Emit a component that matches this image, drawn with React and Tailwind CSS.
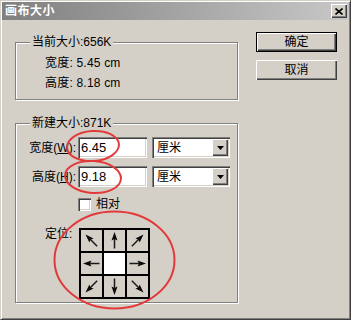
import React from "react";

const FONT = { fontFamily: '"Liberation Sans", "Noto Sans CJK SC", sans-serif' };

function Arrow({ angle }) {
  return (
    <svg width="21" height="21" viewBox="0 0 21 21">
      <g transform={`rotate(${angle} 10.5 10.5)`}>
        <line x1="2.5" y1="10.5" x2="13" y2="10.5" stroke="#1a1a1a" strokeWidth="1.5" />
        <polygon points="10.5,7.5 19,10.5 10.5,13.5 12,10.5" fill="#0a0a0a" />
      </g>
    </svg>
  );
}

function Cell({ angle, center }) {
  if (center) return <div className="w-[21px] h-[21px] bg-white" />;
  return (
    <div className="w-[21px] h-[21px] bg-[#d4d0c8] flex items-center justify-center">
      <Arrow angle={angle} />
    </div>
  );
}

const sunken =
  "shadow-[inset_1px_1px_0_#808080,inset_2px_2px_0_#404040,inset_-1px_-1px_0_#ffffff,inset_-2px_-2px_0_#d4d0c8]";
const raised =
  "shadow-[inset_1px_1px_0_#ffffff,inset_-1px_-1px_0_#404040,inset_-2px_-2px_0_#808080]";

function Select() {
  return (
    <div className={`w-[78px] h-[21px] bg-white relative flex items-center ${sunken}`}>
      <span className="pl-[5px] text-[12px] leading-[14px] text-black">厘米</span>
      <div className={`absolute right-[2px] top-[2px] w-[16px] h-[17px] bg-[#d4d0c8] flex items-center justify-center ${raised}`}>
        <svg width="7" height="4" viewBox="0 0 7 4">
          <polygon points="0,0 7,0 3.5,4" fill="#000" />
        </svg>
      </div>
    </div>
  );
}

function Input({ value }) {
  return (
    <div className={`w-[69px] h-[21px] bg-white flex items-center ${sunken}`}>
      <span className="pl-[3px] text-[13px] leading-[15px] text-black">{value}</span>
    </div>
  );
}

export default function App() {
  return (
    <div
      className="relative w-[351px] h-[320px] bg-[#d4d0c8] border border-t-[#d4d0c8] border-l-[#d4d0c8] border-r-[#404040] border-b-[#404040] shadow-[inset_1px_1px_0_#ffffff,inset_-1px_-1px_0_#808080] p-[1px] flex flex-col text-black"
      style={FONT}
    >
      {/* title bar */}
      <div className="h-[18px] bg-gradient-to-r from-[#808080] to-[#c8c8c8] flex items-center justify-between pl-[3px] pr-[2px]">
        <span className="text-[12px] leading-[14px] font-bold text-white tracking-[0.5px]">画布大小</span>
        <div className={`w-[16px] h-[14px] bg-[#d4d0c8] flex items-center justify-center ${raised}`}>
          <svg width="8" height="7" viewBox="0 0 8 7">
            <path d="M0.5 0.5 L7.5 6.5 M7.5 0.5 L0.5 6.5" stroke="#000" strokeWidth="1.6" />
          </svg>
        </div>
      </div>

      <div className="flex items-start pl-[13px]">
        {/* left column */}
        <div className="flex flex-col w-[223px] pt-[22px]">
          {/* group 1 */}
          <div className="relative h-[58px] border border-[#808080] shadow-[inset_1px_1px_0_#ffffff,1px_1px_0_#ffffff] pl-[29px] pt-[10px]">
            <span className="absolute left-[14px] top-[-8px] px-[2px] bg-[#d4d0c8] text-[12px] leading-[14px]">
              当前大小:656K
            </span>
            <div className="text-[12px] leading-[20px] tracking-[0.2px]">宽度: 5.45 cm</div>
            <div className="text-[12px] leading-[20px] tracking-[0.2px]">高度: 8.18 cm</div>
          </div>

          {/* group 2 */}
          <div className="relative mt-[23px] h-[180px] border border-[#808080] shadow-[inset_1px_1px_0_#ffffff,1px_1px_0_#ffffff] pt-[13px] flex flex-col">
            <span className="absolute left-[14px] top-[-8px] px-[2px] bg-[#d4d0c8] text-[12px] leading-[14px]">
              新建大小:871K
            </span>
            <div className="flex items-center">
              <span className="w-[60px] text-right text-[12px] leading-[14px]">
                宽度(<span className="underline">W</span>):
              </span>
              <div className="ml-[2px]"><Input value="6.45" /></div>
              <div className="ml-[5px]"><Select /></div>
            </div>
            <div className="flex items-center mt-[8px]">
              <span className="w-[60px] text-right text-[12px] leading-[14px]">
                高度(<span className="underline">H</span>):
              </span>
              <div className="ml-[2px]"><Input value="9.18" /></div>
              <div className="ml-[5px]"><Select /></div>
            </div>
            <div className="flex items-center mt-[10px] pl-[62px]">
              <div className={`w-[13px] h-[13px] bg-white ${sunken}`} />
              <span className="ml-[5px] text-[12px] leading-[14px]">相对</span>
            </div>
            <div className="flex items-start mt-[17px] pl-[29px]">
              <span className="w-[34px] text-[12px] leading-[14px] -mt-[1px]">定位:</span>
              <div className="grid grid-cols-3 gap-[2px] p-[2px] bg-black">
                <Cell angle={225} />
                <Cell angle={270} />
                <Cell angle={315} />
                <Cell angle={180} />
                <Cell center />
                <Cell angle={0} />
                <Cell angle={135} />
                <Cell angle={90} />
                <Cell angle={45} />
              </div>
            </div>
          </div>
        </div>

        {/* buttons */}
        <div className="ml-[18px] pt-[12px] flex flex-col">
          <div className="w-[81px] h-[20px] border border-black bg-[#d4d0c8]">
            <div className={`w-full h-full flex items-center justify-center text-[12px] leading-[14px] ${raised}`}>
              确定
            </div>
          </div>
          <div className={`mt-[8px] w-[81px] h-[20px] bg-[#d4d0c8] flex items-center justify-center text-[12px] leading-[14px] ${raised}`}>
            取消
          </div>
        </div>
      </div>

      {/* red annotation ellipses */}
      <svg className="absolute left-0 top-0 pointer-events-none" width="351" height="320" viewBox="0 0 351 320">
        <g fill="none" stroke="#e23a3a" strokeWidth="2">
          <ellipse cx="92" cy="145" rx="26" ry="15" transform="rotate(-4 92 145)" />
          <ellipse cx="92" cy="176" rx="28" ry="16" transform="rotate(4 92 176)" />
          <ellipse cx="113.5" cy="259" rx="60" ry="48.5" />
        </g>
      </svg>
    </div>
  );
}
